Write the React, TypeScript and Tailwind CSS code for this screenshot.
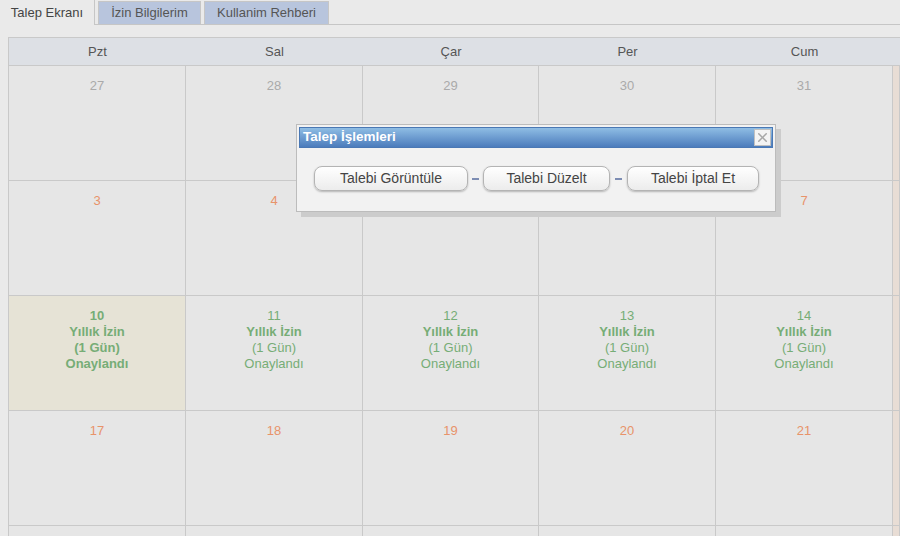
import { X } from "lucide-react"

type Day = {
    n?: number
    muted?: boolean
    leave?: boolean
    today?: boolean
}

const headers = ["Pzt", "Sal", "Çar", "Per", "Cum", ""]

// 6th column (Cmt) is only a sliver at the right edge of the screen
const weeks: Day[][] = [
    [{ n: 27, muted: true }, { n: 28, muted: true }, { n: 29, muted: true }, { n: 30, muted: true }, { n: 31, muted: true }, {}],
    [{ n: 3 }, { n: 4 }, { n: 5 }, { n: 6 }, { n: 7 }, {}],
    [{ n: 10, leave: true, today: true }, { n: 11, leave: true }, { n: 12, leave: true }, { n: 13, leave: true }, { n: 14, leave: true }, {}],
    [{ n: 17 }, { n: 18 }, { n: 19 }, { n: 20 }, { n: 21 }, {}],
    [{}, {}, {}, {}, {}, {}],
]

const cols = "grid grid-cols-[177px_177px_176px_177px_177px_1fr]"

const DayCell = ({ day, weekend }: { day: Day; weekend: boolean }) => {
    const bg = day.today ? "bg-[#e6e3d6]" : weekend ? "bg-[#e8ddd5]" : "bg-[#e6e6e6]"

    return (
        <div className={`h-[115px] border-r border-b border-[#c9c9c9] pt-[12px] text-center text-[13px] leading-[16px] ${bg}`}>
            {day.leave ? (
                <div className={`text-[#76ad76] ${day.today ? "font-bold" : ""}`}>
                    <div>{day.n}</div>
                    <div className="font-bold">Yıllık İzin</div>
                    <div>(1 Gün)</div>
                    <div>Onaylandı</div>
                </div>
            ) : (
                <div className={day.muted ? "text-[#aaaaaa]" : "text-[#e8936a]"}>{day.n}</div>
            )}
        </div>
    )
}

const ActionButton = ({ label }: { label: string }) => (
    <button className="h-[25px] w-full rounded-[8px] border border-[#b4b4b4] bg-gradient-to-b from-white to-[#ececec] text-[14px] text-[#444] shadow-[0_1px_2px_rgba(0,0,0,0.25)]">
        {label}
    </button>
)

export default function App() {
    return (
        <div className="relative h-[536px] w-[900px] overflow-hidden bg-[#eaeaea] font-['Liberation_Sans',Arial,sans-serif]">
            {/* tabs */}
            <div className="flex h-[25px] items-end border-b border-[#c6c6c6]">
                <div className="-mb-px flex h-[25px] w-[95px] items-center justify-center border-r border-[#c6c6c6] bg-[#eaeaea] text-[13px] text-[#444]">
                    Talep Ekranı
                </div>
                <div className="ml-[3px] flex h-[23px] w-[103px] items-center justify-center border border-b-0 border-[#c6c6c6] bg-[#b8c5dd] text-[13px] text-[#555]">
                    İzin Bilgilerim
                </div>
                <div className="ml-[3px] flex h-[23px] w-[125px] items-center justify-center border border-b-0 border-[#c6c6c6] bg-[#b8c5dd] text-[13px] text-[#555]">
                    Kullanim Rehberi
                </div>
            </div>

            {/* calendar */}
            <div className="ml-[8px] mt-[12px] border-l border-t border-[#c9c9c9]">
                <div className={cols}>
                    {headers.map((h, i) => (
                        <div
                            key={i}
                            className="flex h-[28px] items-center justify-center border-b border-[#c9c9c9] bg-[#dde0e5] text-[13px] text-[#555]"
                        >
                            {h}
                        </div>
                    ))}
                </div>
                {weeks.map((week, i) => (
                    <div key={i} className={cols}>
                        {week.map((day, j) => (
                            <DayCell key={j} day={day} weekend={j >= 5} />
                        ))}
                    </div>
                ))}
            </div>

            {/* dialog */}
            <div className="absolute left-[296px] top-[124px] h-[88px] w-[480px] border border-[#bcbcbc] bg-[#f2f2f2] p-[2px] shadow-[5px_5px_0_#cccccc]">
                <div className="flex h-[21px] items-center justify-between border border-[#4a78b4] bg-gradient-to-b from-[#8fbde4] to-[#4c7cbc] pl-[3px] pr-[1px]">
                    <span className="text-[13.5px] font-bold text-white">Talep İşlemleri</span>
                    <span className="flex h-[17px] w-[17px] items-center justify-center border border-[#c0c0c0] bg-[#f4f4f4]">
                        <X size={15} strokeWidth={2.5} className="text-[#a8a8a8]" />
                    </span>
                </div>
                <div className="flex items-center pl-[15px] pt-[18px]">
                    <div className="w-[154px]"><ActionButton label="Talebi Görüntüle" /></div>
                    <span className="mx-[4px] h-[2px] w-[7px] bg-[#7d8db3]" />
                    <div className="w-[127px]"><ActionButton label="Talebi Düzelt" /></div>
                    <span className="mx-[5px] h-[2px] w-[7px] bg-[#7d8db3]" />
                    <div className="w-[132px]"><ActionButton label="Talebi İptal Et" /></div>
                </div>
            </div>
        </div>
    )
}
